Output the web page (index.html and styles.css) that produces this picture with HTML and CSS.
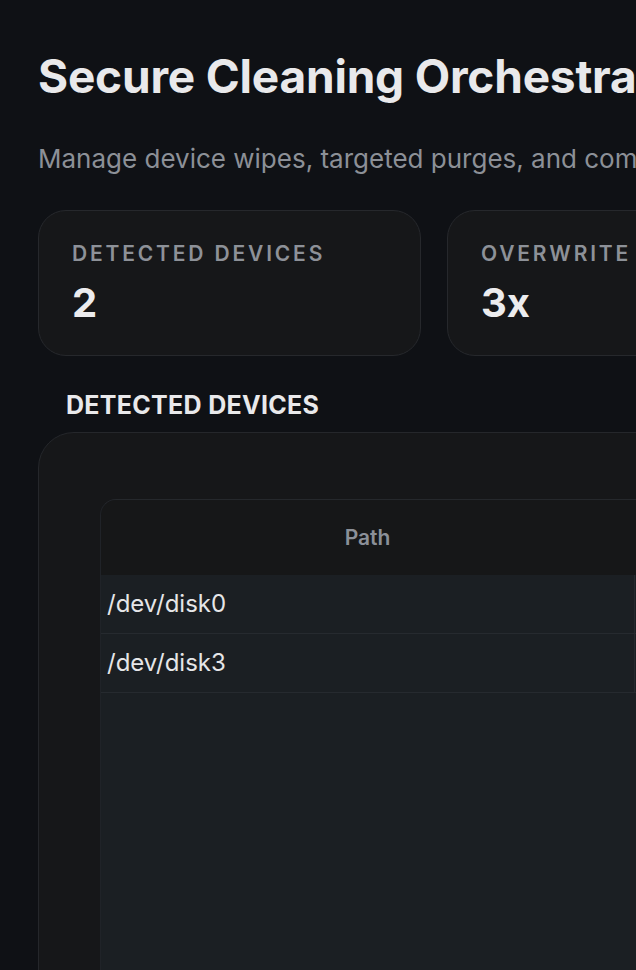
FILE: index.html
```html
<!DOCTYPE html>
<html lang="en">
<head>
<meta charset="utf-8">
<title>Secure Cleaning Orchestrator</title>
<link rel="stylesheet" href="styles.css">
</head>
<body>
<main class="page">
  <header class="intro">
    <h1 class="title">Secure Cleaning Orchestrator</h1>
    <p class="subtitle">Manage device wipes, targeted purges, and compliance reporting from a single console.</p>
  </header>

  <section class="stats">
    <div class="card">
      <div class="card-label">Detected Devices</div>
      <div class="card-value">2</div>
    </div>
    <div class="card">
      <div class="card-label">Overwrite Passes</div>
      <div class="card-value">3x</div>
    </div>
    <div class="card">
      <div class="card-label">Active Jobs</div>
      <div class="card-value">0</div>
    </div>
  </section>

  <h2 class="section-title">Detected Devices</h2>

  <section class="panel">
    <div class="table-wrap">
      <table class="devices">
        <thead>
          <tr>
            <th class="col-path">Path</th>
            <th class="col-other">Size</th>
            <th class="col-other">Status</th>
          </tr>
        </thead>
        <tbody>
          <tr>
            <td>/dev/disk0</td>
            <td>500 GB</td>
            <td>Ready</td>
          </tr>
          <tr>
            <td>/dev/disk3</td>
            <td>64 GB</td>
            <td>Ready</td>
          </tr>
        </tbody>
      </table>
    </div>
  </section>
</main>
</body>
</html>
```

FILE: styles.css
```css
html, body {
  margin: 0;
  padding: 0;
  background: #0f1115;
  overflow: hidden;
}

body {
  font-family: Inter, "Noto Sans", "Liberation Sans", sans-serif;
  color: #e8e8ea;
}

.page {
  width: 1400px;
  padding: 49px 0 0 38px;
  box-sizing: border-box;
}

.title {
  margin: 0;
  font-size: 46px;
  line-height: 1.2;
  font-weight: 700;
  letter-spacing: -0.2px;
  color: #e9e9eb;
  white-space: nowrap;
}

.subtitle {
  margin: 37px 0 0 0;
  font-size: 26px;
  line-height: 1.4;
  color: #8c9097;
  white-space: nowrap;
}

.stats {
  margin-top: 32px;
  display: grid;
  grid-template-columns: 383px 383px 383px;
  gap: 26px;
}

.card {
  background: #161719;
  border: 1px solid #26282c;
  border-radius: 28px;
  padding: 31px 33px 28px;
}

.card-label {
  font-size: 21px;
  line-height: 24px;
  font-weight: 600;
  letter-spacing: 0.135em;
  text-transform: uppercase;
  color: #8d9198;
  white-space: nowrap;
}

.card-value {
  margin-top: 13px;
  font-size: 40px;
  line-height: 48px;
  font-weight: 700;
  color: #ececee;
}

.section-title {
  margin: 35px 0 0 28px;
  font-size: 25px;
  line-height: 29px;
  font-weight: 700;
  letter-spacing: 0.3px;
  text-transform: uppercase;
  color: #e9e9eb;
}

.panel {
  margin-top: 12px;
  background: #161719;
  border: 1px solid #25272b;
  border-radius: 36px;
  padding: 66px 0 0 61px;
  height: 700px;
  box-sizing: border-box;
}

.table-wrap {
  background: #1b1f23;
  border-top: 1px solid #25282c;
  border-left: 1px solid #202328;
  border-top-left-radius: 16px;
  height: 700px;
  overflow: hidden;
}

.devices {
  border-collapse: collapse;
  table-layout: fixed;
  width: 1100px;
}

.devices thead tr {
  background: #161718;
}

.devices th {
  height: 75px;
  padding: 0;
  font-size: 21px;
  font-weight: 600;
  color: #8b9098;
  text-align: center;
}

.col-path {
  width: 527px;
}

.col-other {
  width: 280px;
}

.devices td {
  height: 58px;
  padding: 0 6px;
  font-size: 24px;
  color: #e6e6e8;
  border-bottom: 1px solid #262a2f;
  border-right: 1px solid #262a2f;
  white-space: nowrap;
}
```
